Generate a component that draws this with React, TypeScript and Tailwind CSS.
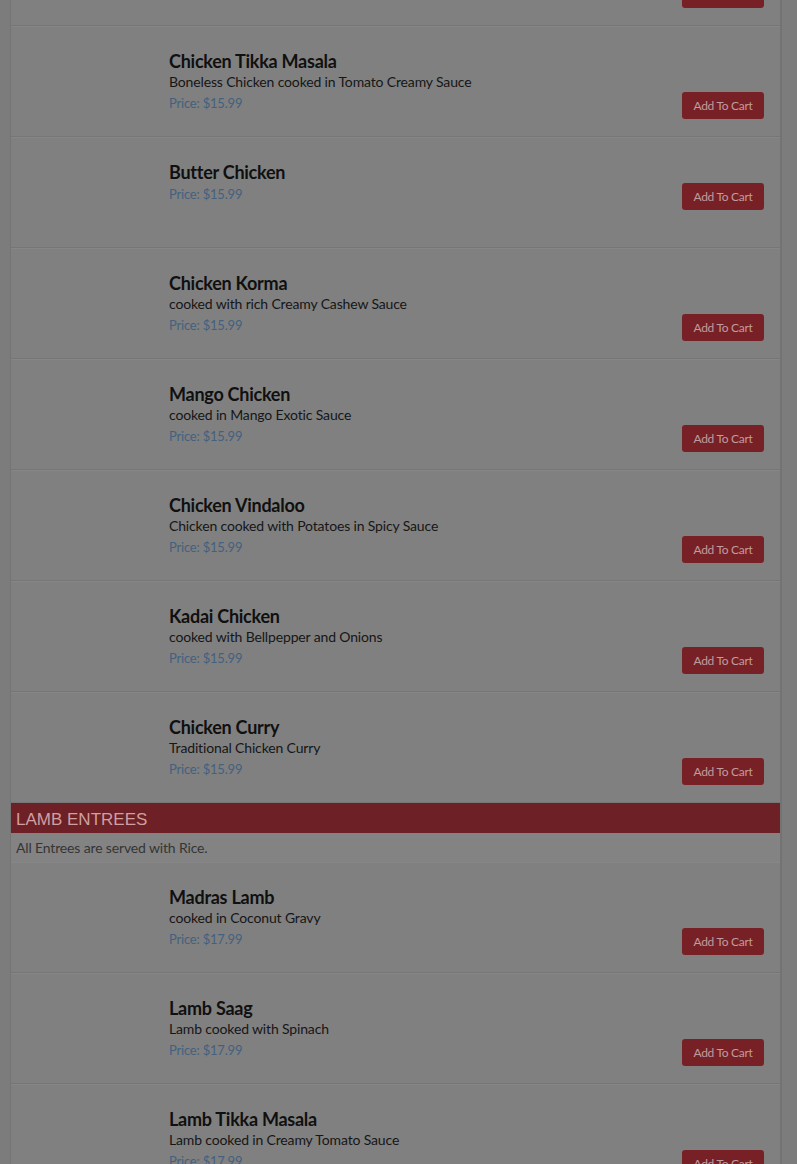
import React from 'react';

type Item = { name: string; desc?: string; price: string };

const chicken: Item[] = [
  { name: 'Chicken Saag', desc: 'Chicken cooked with Spinach', price: '$15.99' },
  { name: 'Chicken Tikka Masala', desc: 'Boneless Chicken cooked in Tomato Creamy Sauce', price: '$15.99' },
  { name: 'Butter Chicken', price: '$15.99' },
  { name: 'Chicken Korma', desc: 'cooked with rich Creamy Cashew Sauce', price: '$15.99' },
  { name: 'Mango Chicken', desc: 'cooked in Mango Exotic Sauce', price: '$15.99' },
  { name: 'Chicken Vindaloo', desc: 'Chicken cooked with Potatoes in Spicy Sauce', price: '$15.99' },
  { name: 'Kadai Chicken', desc: 'cooked with Bellpepper and Onions', price: '$15.99' },
  { name: 'Chicken Curry', desc: 'Traditional Chicken Curry', price: '$15.99' },
];

const lamb: Item[] = [
  { name: 'Madras Lamb', desc: 'cooked in Coconut Gravy', price: '$17.99' },
  { name: 'Lamb Saag', desc: 'Lamb cooked with Spinach', price: '$17.99' },
  { name: 'Lamb Tikka Masala', desc: 'Lamb cooked in Creamy Tomato Sauce', price: '$17.99' },
];

function MenuRow({ item }: { item: Item }) {
  return (
    <div className="flex h-[111px] border-t border-[#868686] border-b border-b-[#767676]">
      {/* image slot, empty */}
      <div className="w-[158px] shrink-0" />
      <div className="flex-1 pt-[24px] pr-[16px]">
        <div className="text-[18px] leading-[21px] font-bold tracking-[-0.25px] text-[#101010]">{item.name}</div>
        {item.desc && (
          <div className="text-[14px] leading-[20px] tracking-[-0.15px] text-[#161616]">{item.desc}</div>
        )}
        <div className="flex items-start justify-between mt-[1px]">
          <div className="text-[13px] leading-[20px] tracking-[-0.2px] text-[#44607f]">Price: {item.price}</div>
          <button className="-mt-[1px] h-[27px] w-[82px] rounded-[3px] bg-[#772126] text-[12px] tracking-[-0.3px] text-[#c09c9e]">
            Add To Cart
          </button>
        </div>
      </div>
    </div>
  );
}

export default function App() {
  return (
    <div
      className="min-h-[1164px] bg-[#7c7c7c] overflow-hidden"
      style={{ fontFamily: '"Source Sans Pro", Lato, "Noto Sans", sans-serif' }}
    >
      <div className="ml-[10px] w-[772px] border-l border-[#747474] border-r-2 border-r-[#737373] bg-[#808080] -mt-[85px]">
        {chicken.map((it) => (
          <MenuRow key={it.name} item={it} />
        ))}

        <div
          className="h-[30px] bg-[#6d2025] px-[5px] pt-[7px] text-[17px] leading-[20px] text-[#cf9fa2]"
          style={{ fontFamily: '"Liberation Sans", Arial, sans-serif' }}
        >
          LAMB ENTREES
        </div>
        <div className="h-[29px] bg-[#838383] px-[5px] pt-[5px] text-[14px] leading-[20px] tracking-[-0.15px] text-[#353535]">
          All Entrees are served with Rice.
        </div>

        {lamb.map((it) => (
          <MenuRow key={it.name} item={it} />
        ))}
      </div>
    </div>
  );
}
